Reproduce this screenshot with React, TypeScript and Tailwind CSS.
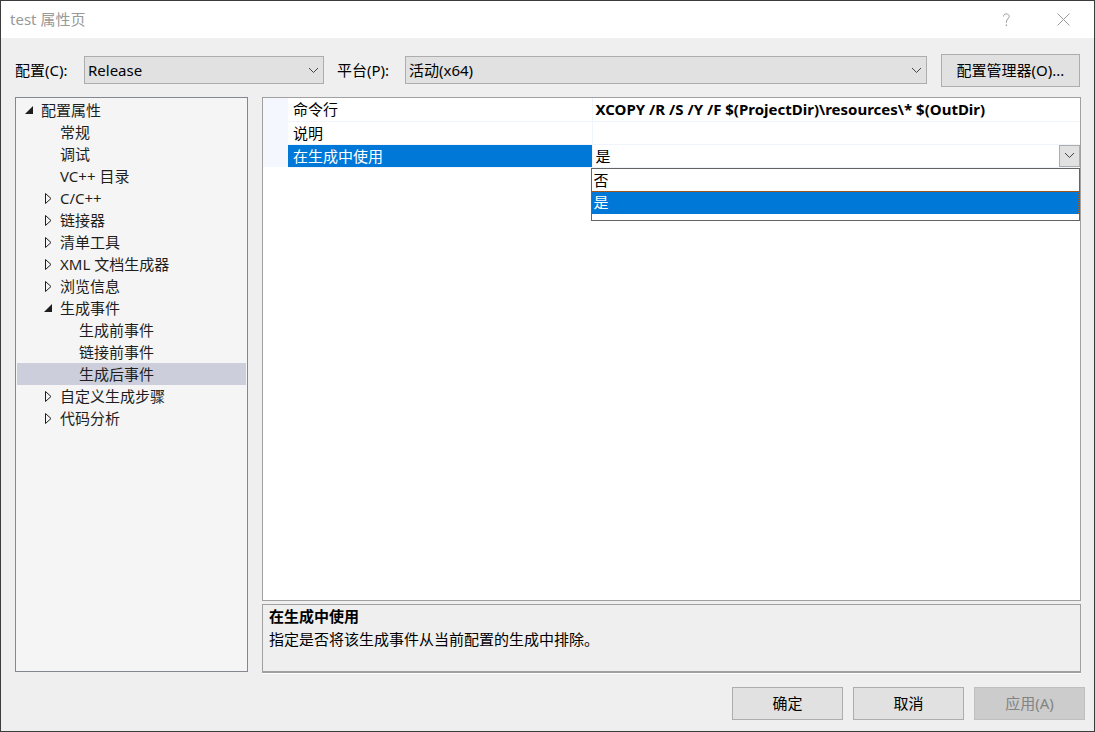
import { useState } from 'react'
import clsx from 'clsx'

type TreeItem = {
  label: string
  level: 0 | 1 | 2
  state?: 'open' | 'closed'
}

const TREE: TreeItem[] = [
  { label: '配置属性', level: 0, state: 'open' },
  { label: '常规', level: 1 },
  { label: '调试', level: 1 },
  { label: 'VC++ 目录', level: 1 },
  { label: 'C/C++', level: 1, state: 'closed' },
  { label: '链接器', level: 1, state: 'closed' },
  { label: '清单工具', level: 1, state: 'closed' },
  { label: 'XML 文档生成器', level: 1, state: 'closed' },
  { label: '浏览信息', level: 1, state: 'closed' },
  { label: '生成事件', level: 1, state: 'open' },
  { label: '生成前事件', level: 2 },
  { label: '链接前事件', level: 2 },
  { label: '生成后事件', level: 2 },
  { label: '自定义生成步骤', level: 1, state: 'closed' },
  { label: '代码分析', level: 1, state: 'closed' },
]

const INDENT = ['pl-[7px]', 'pl-[26px]', 'pl-[45px]']

const BUTTON = 'h-[33px] border border-[#adadad] bg-[#e1e1e1] text-center leading-[31px]'

function Chevron() {
  return (
    <svg width="11" height="7" viewBox="0 0 11 7" fill="none" stroke="#444" aria-hidden="true">
      <path d="M1 1l4.5 4.5L10 1" />
    </svg>
  )
}

function Arrow({ state }: { state?: TreeItem['state'] }) {
  return (
    <svg className="shrink-0" width="16" height="22" viewBox="0 0 16 22" aria-hidden="true">
      {state === 'open' && <path d="M9 7v8H1z" fill="#1e1e1e" />}
      {state === 'closed' && <path d="M2.5 6.5v10l5.5-5z" fill="none" stroke="#1e1e1e" />}
    </svg>
  )
}

type ComboProps = {
  id: string
  options: string[]
  className: string
}

function Combo({ id, options, className }: ComboProps) {
  return (
    <div className={clsx('relative mt-0.5', className)}>
      <select
        id={id}
        className="block h-7 w-full appearance-none border border-[#adadad] bg-[#e1e1e1] pl-[3px] pr-6 leading-[26px]"
      >
        {options.map((o) => (
          <option key={o}>{o}</option>
        ))}
      </select>
      <span className="pointer-events-none absolute inset-y-0 right-[5px] flex items-center">
        <Chevron />
      </span>
    </div>
  )
}

export default function App() {
  const [selected, setSelected] = useState('生成后事件')
  const [useInBuild, setUseInBuild] = useState('是')
  const [listOpen, setListOpen] = useState(true)

  return (
    <div className="flex min-h-screen flex-col border border-[#3c3c3c] bg-[#efefef] font-['Noto_Sans','Noto_Sans_CJK_SC',sans-serif] text-[15px] leading-[22px] text-black">
      {/* Title bar */}
      <header className="flex h-[37px] bg-white pr-0.5 text-[#999]">
        <h1 className="flex-1 pl-[9px] leading-[36px]">test 属性页</h1>
        <button className="flex h-full w-[57px] items-center justify-center" aria-label="帮助">
          <svg width="9" height="14" viewBox="0 0 9 14" fill="none" stroke="currentColor" aria-hidden="true">
            <path d="M1.5 3.5C1.5 1.7 2.7.9 4.3.9S7.2 1.8 7.2 3.4C7.2 5.6 4.4 6 4.4 9v.8" />
            <path d="M4.4 11.5V13" strokeWidth="1.3" />
          </svg>
        </button>
        <button className="flex h-full w-[57px] items-center justify-center" aria-label="关闭">
          <svg width="13" height="13" viewBox="0 0 13 13" fill="none" stroke="currentColor" aria-hidden="true">
            <path d="M.5.5l12 12M12.5.5l-12 12" />
          </svg>
        </button>
      </header>

      {/* Configuration / platform */}
      <div className="flex items-start px-[14px] pt-4">
        <label htmlFor="config" className="w-[69px] leading-[33px]">配置(C):</label>
        <Combo id="config" className="w-60" options={['Release', 'Debug']} />
        <label htmlFor="platform" className="ml-[13px] w-[68px] leading-[33px]">平台(P):</label>
        <Combo id="platform" className="flex-1" options={['活动(x64)', 'Win32', 'x64']} />
        <button className={clsx(BUTTON, 'ml-[14px] w-[139px]')}>配置管理器(O)...</button>
      </div>

      <main className="flex flex-1 gap-[14px] pl-[14px] pr-[13px] pt-[10px]">
        <ul role="tree" className="mb-px w-[233px] border border-[#828790] bg-[#f5f5f5] p-px text-[#1e1e1e]">
          {TREE.map((item) => (
            <li
              key={item.label}
              role="treeitem"
              aria-level={item.level + 1}
              aria-selected={item.label === selected}
              onClick={() => setSelected(item.label)}
              className={clsx(
                'flex h-[22px] cursor-default gap-px',
                INDENT[item.level],
                item.label === selected && 'bg-[#cccedb]'
              )}
            >
              <Arrow state={item.state} />
              <span>{item.label}</span>
            </li>
          ))}
        </ul>

        <div className="flex min-w-0 flex-1 flex-col gap-[3px]">
          {/* Property grid */}
          <div className="flex-1 border border-[#a0a0a0] bg-white">
            <table className="w-full table-fixed border-collapse">
              <colgroup>
                <col className="w-[25px]" />
                <col className="w-[304px]" />
                <col />
              </colgroup>
              <tbody>
                <tr className="h-[23px]">
                  <td className="bg-[#f4f8fe] p-0" />
                  <th className="border-b border-[#f0f5fc] p-0 pl-[5px] text-left font-normal">命令行</th>
                  <td className="border-b border-l border-[#f0f5fc] p-0 pl-[3px] font-bold">
                    XCOPY /R /S /Y /F $(ProjectDir)\resources\* $(OutDir)
                  </td>
                </tr>
                <tr className="h-[23px]">
                  <td className="bg-[#f4f8fe] p-0" />
                  <th className="border-b border-[#f0f5fc] p-0 pl-[5px] text-left font-normal">说明</th>
                  <td className="border-b border-l border-[#f0f5fc] p-0" />
                </tr>
                <tr className="h-[23px]">
                  <td className="bg-[#f4f8fe] p-0" />
                  <th className="border-b border-[#f0f5fc] bg-[#0078d7] p-0 pl-[5px] text-left font-normal text-white">
                    <label htmlFor="use-in-build">在生成中使用</label>
                  </th>
                  <td className="relative border-b border-l border-[#f0f5fc] p-0">
                    <div className="flex h-[22px]">
                      <select
                        id="use-in-build"
                        value={useInBuild}
                        onChange={(e) => setUseInBuild(e.target.value)}
                        className="flex-1 appearance-none bg-white pl-[3px]"
                      >
                        <option>否</option>
                        <option>是</option>
                      </select>
                      <button
                        aria-label="展开"
                        aria-expanded={listOpen}
                        onClick={() => setListOpen(!listOpen)}
                        className="flex w-[21px] items-center justify-center border border-[#adadad] bg-[#e1e1e1]"
                      >
                        <Chevron />
                      </button>
                    </div>
                    {listOpen && (
                      <ul
                        role="listbox"
                        aria-label="在生成中使用"
                        className="absolute -left-0.5 right-0 top-full mt-px border border-[#646464] bg-white pb-1.5"
                      >
                        {['否', '是'].map((o) => (
                          <li
                            key={o}
                            role="option"
                            aria-selected={o === useInBuild}
                            onClick={() => {
                              setUseInBuild(o)
                              setListOpen(false)
                            }}
                            className={clsx(
                              'cursor-default pl-0.5',
                              o === useInBuild
                                ? 'h-[23px] border-r border-t border-dotted border-[#a85a1c] bg-[#0078d7] leading-[21px] text-white'
                                : 'h-[22px]'
                            )}
                          >
                            {o}
                          </li>
                        ))}
                      </ul>
                    )}
                  </td>
                </tr>
              </tbody>
            </table>
          </div>

          {/* Description */}
          <section className="h-[69px] border border-b-2 border-[#a0a0a0] px-1.5 leading-[23px] shadow-[0_1px_0_#fff]">
            <h2 className="font-bold">在生成中使用</h2>
            <p>指定是否将该生成事件从当前配置的生成中排除。</p>
          </section>
        </div>
      </main>

      <footer className="flex justify-end gap-[10px] pb-[11px] pr-[9px] pt-[14px]">
        <button className={clsx(BUTTON, 'w-[111px]')}>确定</button>
        <button className={clsx(BUTTON, 'w-[111px]')}>取消</button>
        <button disabled className="h-[33px] w-[111px] border border-[#bfbfbf] bg-[#ccc] text-center leading-[31px] text-[#838383]">
          应用(A)
        </button>
      </footer>
    </div>
  )
}
